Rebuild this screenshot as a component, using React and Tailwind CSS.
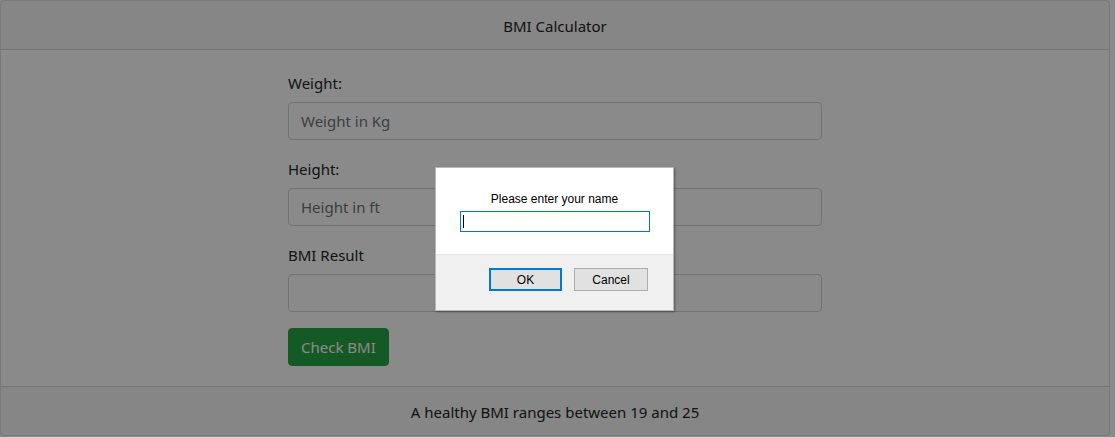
export default function App() {
  return (
    <div className="relative h-[437px] w-[1115px] overflow-hidden bg-white font-['Noto_Sans',sans-serif] text-[15px] text-[#212529]">
      <div className="w-[1110px] rounded-[4px] border border-black/[.125]">
        <div className="h-[49px] border-b border-black/[.125] bg-black/[.03] pt-[2px] text-center leading-[46px]">BMI Calculator</div>
        <div className="p-5">
          <div className="mx-auto w-[534px]">
            <Field label="Weight:" placeholder="Weight in Kg" />
            <Field label="Height:" placeholder="Height in ft" />
            <Field label="BMI Result" placeholder="" />
            <button className="h-[38px] rounded-[4px] border border-[#28a745] bg-[#28a745] px-3 pt-[1px] text-white">Check BMI</button>
          </div>
        </div>
        <div className="h-[49px] border-t border-black/[.125] bg-black/[.03] pt-[2px] text-center leading-[46px]">A healthy BMI ranges between 19 and 25</div>
      </div>

      <div className="absolute inset-0 bg-black/[.46]" />

      <div className="absolute left-[435px] top-[167px] w-[239px] border border-[#b9b9b9] bg-white font-['Liberation_Sans',Arial,sans-serif] text-[12px] text-black shadow-[1px_1px_2px_rgba(0,0,0,0.35)]">
        <div className="flex h-[86px] flex-col items-center pt-[24px]">
          <div className="leading-[14px]">Please enter your name</div>
          <div className="mt-[5px] flex h-[21px] w-[190px] items-center border border-[#0078d7] pl-[2px]">
            <div className="h-[13px] w-px bg-black" />
          </div>
        </div>
        <div className="flex h-[56px] justify-end gap-[12px] border-t border-[#e6e6e6] bg-[#f0f0f0] pr-[25px] pt-[13px]">
          <button className="h-[23px] w-[73px] border-2 border-[#0078d7] bg-[#e1e1e1]">OK</button>
          <button className="h-[23px] w-[74px] border border-[#adadad] bg-[#e1e1e1]">Cancel</button>
        </div>
      </div>
    </div>
  )
}

function Field({ label, placeholder }) {
  return (
    <div className="mb-4">
      <div className="mb-2 pt-[2px] leading-[22px]">{label}</div>
      <div className="flex h-[38px] items-center rounded-[4px] border border-[#ced4da] px-3 pt-[1px] text-[#6c757d]">{placeholder}</div>
    </div>
  )
}
